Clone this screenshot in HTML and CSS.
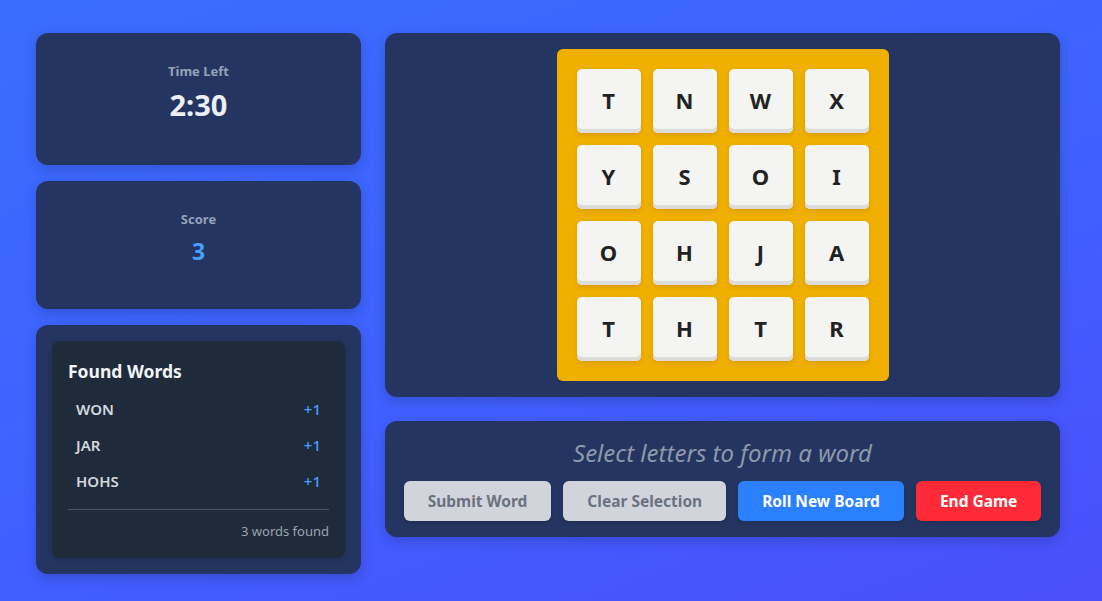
FILE: index.html
```html
<!DOCTYPE html>
<html>
<head>
<meta charset="utf-8">
<link rel="stylesheet" href="styles.css">
</head>
<body>
<div class="app">
  <aside class="side">
    <section class="card stat">
      <div class="stat-label">Time Left</div>
      <div class="stat-value time">2:30</div>
    </section>
    <section class="card stat">
      <div class="stat-label">Score</div>
      <div class="stat-value score">3</div>
    </section>
    <section class="card words-card">
      <div class="words">
        <h2 class="words-title">Found Words</h2>
        <ul class="word-list">
          <li class="word-row"><span>WON</span><span class="pts">+1</span></li>
          <li class="word-row"><span>JAR</span><span class="pts">+1</span></li>
          <li class="word-row"><span>HOHS</span><span class="pts">+1</span></li>
        </ul>
        <div class="words-foot">3 words found</div>
      </div>
    </section>
  </aside>
  <main class="main">
    <section class="card board-card">
      <div class="board">
        <div class="tile">T</div><div class="tile">N</div><div class="tile">W</div><div class="tile">X</div>
        <div class="tile">Y</div><div class="tile">S</div><div class="tile">O</div><div class="tile">I</div>
        <div class="tile">O</div><div class="tile">H</div><div class="tile">J</div><div class="tile">A</div>
        <div class="tile">T</div><div class="tile">H</div><div class="tile">T</div><div class="tile">R</div>
      </div>
    </section>
    <section class="card controls">
      <div class="current">Select letters to form a word</div>
      <div class="buttons">
        <button class="btn btn-gray">Submit Word</button>
        <button class="btn btn-gray">Clear Selection</button>
        <button class="btn btn-blue">Roll New Board</button>
        <button class="btn btn-red">End Game</button>
      </div>
    </section>
  </main>
</div>
</body>
</html>
```
FILE: styles.css
```css
* { box-sizing: border-box; }
html, body { margin: 0; padding: 0; }
body {
  width: 1102px;
  height: 601px;
  overflow: hidden;
  background: linear-gradient(160deg, #3a6cff 0%, #3f62ff 50%, #4a4ffa 100%);
  font-family: "Noto Sans", "Open Sans", "Liberation Sans", sans-serif;
}
.app {
  display: flex;
  gap: 24px;
  padding: 33px 0 0 36px;
  width: 1060px;
  align-items: flex-start;
}
.side {
  width: 325px;
  display: flex;
  flex-direction: column;
  gap: 16px;
}
.main {
  width: 675px;
  display: flex;
  flex-direction: column;
  gap: 24px;
}
.card {
  background: #243561;
  border-radius: 12px;
  box-shadow: 0 4px 12px rgba(20, 30, 80, 0.25);
}
.stat {
  padding: 28px 16px 40px;
  text-align: center;
}
.stat-label {
  font-size: 13px;
  line-height: 20px;
  font-weight: 700;
  color: #94a3b8;
  margin-bottom: 4px;
}
.stat-value { font-weight: 700; }
.time { font-size: 29px; line-height: 40px; color: #eceef3; }
.score { font-size: 23px; line-height: 36px; color: #4aa0ff; }

.words-card { padding: 16px; }
.words {
  background: #1f2a3b;
  border-radius: 8px;
  padding: 16px 16px 17px;
  box-shadow: 0 2px 6px rgba(0,0,0,0.15);
}
.words-title {
  margin: 0 0 6px;
  font-size: 17.5px;
  line-height: 28px;
  font-weight: 700;
  color: #f1f3f6;
}
.word-list { list-style: none; margin: 0; padding: 0; }
.word-row {
  display: flex;
  justify-content: space-between;
  align-items: center;
  height: 36px;
  padding: 0 8px;
  font-size: 15px;
  font-weight: 600;
  color: #d3d7de;
}
.pts { color: #4b9dff; font-weight: 500; font-size: 15px; }
.words-foot {
  margin-top: 10px;
  border-top: 1px solid #4a5568;
  padding-top: 11px;
  text-align: right;
  font-size: 13px;
  line-height: 20px;
  color: #9ca3af;
}

.board-card {
  padding: 16px;
  display: flex;
  justify-content: center;
}
.board {
  background: #f0b000;
  border-radius: 6px;
  padding: 20px;
  display: grid;
  grid-template-columns: repeat(4, 64px);
  grid-auto-rows: 64px;
  gap: 12px;
}
.tile {
  background: #f4f4f2;
  border-radius: 5px;
  box-shadow: inset 0 -4px 0 #dcdcda, 0 2px 4px rgba(150, 100, 0, 0.25);
  display: flex;
  align-items: center;
  justify-content: center;
  padding-bottom: 3px;
  font-size: 22px;
  font-weight: 700;
  color: #222;
}

.controls {
  padding: 16px;
  display: flex;
  flex-direction: column;
  align-items: center;
  gap: 12px;
}
.current {
  font-size: 24px;
  line-height: 32px;
  font-style: italic;
  color: #8d98aa;
}
.buttons {
  display: flex;
  justify-content: center;
  gap: 12px;
}
.btn {
  height: 40px;
  padding: 0 24px;
  border: none;
  border-radius: 6px;
  font-family: inherit;
  font-size: 15.5px;
  font-weight: 700;
  box-shadow: 0 2px 4px rgba(0,0,0,0.15);
}
.btn-gray { background: #d1d5db; color: #6b7280; }
.btn-blue { background: #2b80ff; color: #fff; }
.btn-red { background: #ff2a37; color: #fff; }
```
